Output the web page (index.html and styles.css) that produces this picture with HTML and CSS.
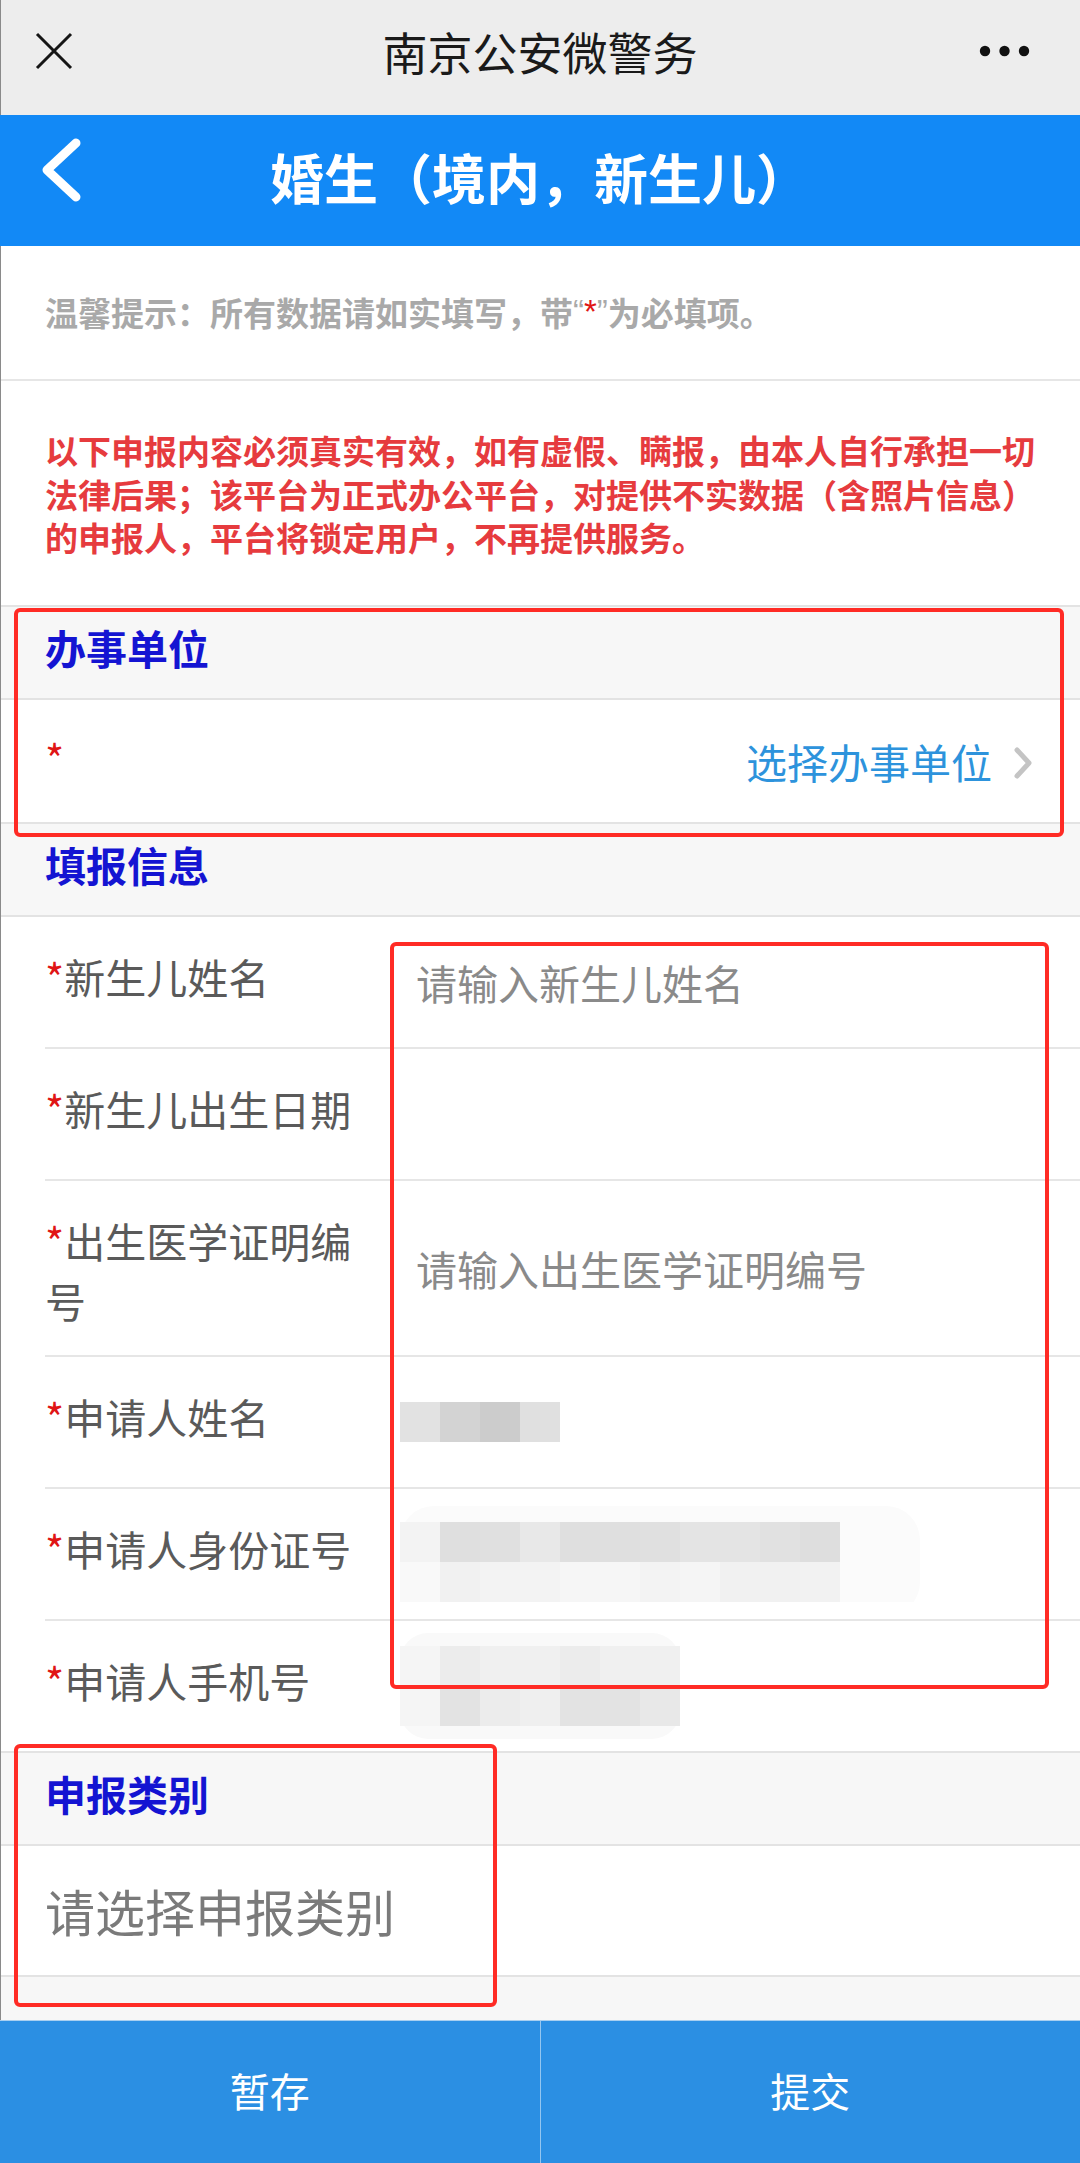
FILE: index.html
```html
<!DOCTYPE html>
<html lang="zh-CN">
<head>
<meta charset="utf-8">
<title>婚生（境内，新生儿）</title>
<link rel="stylesheet" href="styles.css">
</head>
<body>
<div class="page">
  <header class="topbar">
    <div class="tb-left">
      <svg class="close-icon" width="40" height="40" viewBox="0 0 40 40"><path d="M3 3 L37 37 M37 3 L3 37" stroke="#151515" stroke-width="3" fill="none"/></svg>
    </div>
    <div class="tb-title">南京公安微警务</div>
    <div class="tb-right">
      <svg class="dots-icon" width="52" height="12" viewBox="0 0 52 12"><circle cx="6" cy="6" r="5.2" fill="#111"/><circle cx="25.5" cy="6" r="5.2" fill="#111"/><circle cx="45" cy="6" r="5.2" fill="#111"/></svg>
    </div>
  </header>

  <div class="navbar">
    <div class="nav-left">
      <svg class="back-icon" width="48" height="72" viewBox="0 0 48 72"><polyline points="38,8 9,35 38,62" stroke="#fff" stroke-width="9" stroke-linecap="round" stroke-linejoin="round" fill="none"/></svg>
    </div>
    <h1 class="nav-title">婚生（境内，新生儿）</h1>
    <div class="nav-right"></div>
  </div>

  <main class="content">
    <div class="hint">温馨提示：所有数据请如实填写，带<span class="q">“</span><span class="req q">*</span><span class="q">”</span>为必填项。</div>
    <div class="warning">以下申报内容必须真实有效，如有虚假、瞒报，由本人自行承担一切法律后果；该平台为正式办公平台，对提供不实数据（含照片信息）的申报人，平台将锁定用户，不再提供服务。</div>

    <div class="sec-head">办事单位</div>
    <div class="unit-row">
      <span class="req">*</span>
      <span class="unit-pick">选择办事单位<svg class="chev" width="22" height="32" viewBox="0 0 22 32"><polyline points="5,3 17,16 5,29" stroke="#c4c4c4" stroke-width="5" fill="none" stroke-linecap="round" stroke-linejoin="round"/></svg></span>
    </div>

    <div class="sec-head">填报信息</div>
    <div class="fields">
      <div class="field">
        <div class="f-label"><span class="req">*</span>新生儿姓名</div>
        <div class="f-value">请输入新生儿姓名</div>
      </div>
      <div class="field">
        <div class="f-label"><span class="req">*</span>新生儿出生日期</div>
        <div class="f-value"></div>
      </div>
      <div class="field">
        <div class="f-label"><span class="req">*</span>出生医学证明编<br>号</div>
        <div class="f-value">请输入出生医学证明编号</div>
      </div>
      <div class="field">
        <div class="f-label"><span class="req">*</span>申请人姓名</div>
        <div class="f-value">
          <svg class="mosaic" width="160" height="40" viewBox="0 0 160 40">
            <rect x="0" y="0" width="40" height="40" fill="#e2e2e2"/>
            <rect x="40" y="0" width="40" height="40" fill="#d3d3d3"/>
            <rect x="80" y="0" width="40" height="40" fill="#cccccc"/>
            <rect x="120" y="0" width="40" height="40" fill="#e0e0e0"/>
          </svg>
        </div>
      </div>
      <div class="field">
        <div class="f-label"><span class="req">*</span>申请人身份证号</div>
        <div class="f-value">
          <svg class="mosaic" width="520" height="96" viewBox="0 0 520 96">
            <rect x="0" y="0" width="520" height="110" rx="34" fill="#fbfbfb"/>
            <rect x="0" y="16" width="40" height="40" fill="#f3f3f3"/>
            <rect x="40" y="16" width="40" height="40" fill="#dfdfdf"/>
            <rect x="80" y="16" width="40" height="40" fill="#e0e0e0"/>
            <rect x="120" y="16" width="40" height="40" fill="#e8e8e8"/>
            <rect x="160" y="16" width="40" height="40" fill="#dfdfdf"/>
            <rect x="200" y="16" width="40" height="40" fill="#dfdfdf"/>
            <rect x="240" y="16" width="40" height="40" fill="#e0e0e0"/>
            <rect x="280" y="16" width="40" height="40" fill="#e4e4e4"/>
            <rect x="320" y="16" width="40" height="40" fill="#e4e4e4"/>
            <rect x="360" y="16" width="40" height="40" fill="#e1e1e1"/>
            <rect x="400" y="16" width="40" height="40" fill="#dedede"/>
            <rect x="0" y="56" width="40" height="40" fill="#f9f9f9"/>
            <rect x="40" y="56" width="40" height="40" fill="#f1f1f1"/>
            <rect x="80" y="56" width="40" height="40" fill="#f3f3f3"/>
            <rect x="120" y="56" width="40" height="40" fill="#f3f3f3"/>
            <rect x="160" y="56" width="40" height="40" fill="#f6f6f6"/>
            <rect x="200" y="56" width="40" height="40" fill="#f6f6f6"/>
            <rect x="240" y="56" width="40" height="40" fill="#f3f3f3"/>
            <rect x="280" y="56" width="40" height="40" fill="#f5f5f5"/>
            <rect x="320" y="56" width="40" height="40" fill="#f1f1f1"/>
            <rect x="360" y="56" width="40" height="40" fill="#f1f1f1"/>
            <rect x="400" y="56" width="40" height="40" fill="#f2f2f2"/>
          </svg>
        </div>
      </div>
      <div class="field">
        <div class="f-label"><span class="req">*</span>申请人手机号</div>
        <div class="f-value">
          <svg class="mosaic" width="280" height="106" viewBox="0 0 280 106">
            <rect x="0" y="0" width="280" height="106" rx="28" fill="#f9f9f9"/>
            <rect x="0" y="13" width="40" height="40" fill="#f5f5f5"/>
            <rect x="40" y="13" width="40" height="40" fill="#ececec"/>
            <rect x="80" y="13" width="40" height="40" fill="#f0f0f0"/>
            <rect x="120" y="13" width="40" height="40" fill="#f0f0f0"/>
            <rect x="160" y="13" width="40" height="40" fill="#ececec"/>
            <rect x="200" y="13" width="40" height="40" fill="#f0f0f0"/>
            <rect x="240" y="13" width="40" height="40" fill="#f0f0f0"/>
            <rect x="0" y="53" width="40" height="40" fill="#f5f5f5"/>
            <rect x="40" y="53" width="40" height="40" fill="#e3e3e3"/>
            <rect x="80" y="53" width="40" height="40" fill="#ececec"/>
            <rect x="120" y="53" width="40" height="40" fill="#efefef"/>
            <rect x="160" y="53" width="40" height="40" fill="#e3e3e3"/>
            <rect x="200" y="53" width="40" height="40" fill="#e3e3e3"/>
            <rect x="240" y="53" width="40" height="40" fill="#e8e8e8"/>
          </svg>
        </div>
      </div>
    </div>

    <div class="sec-head">申报类别</div>
    <div class="select-row">请选择申报类别</div>
    <div class="spacer"></div>
    <div class="edge"></div>
  </main>

  <footer class="actions">
    <div class="btn">暂存</div>
    <div class="btn">提交</div>
  </footer>

  <div class="mark mark-unit"></div>
  <div class="mark mark-fields"></div>
  <div class="mark mark-type"></div>
</div>
</body>
</html>
```

FILE: styles.css
```css
* { box-sizing: border-box; }

html, body {
  margin: 0;
  padding: 0;
  background: #ffffff;
}

body {
  font-family: "Noto Sans CJK SC", "Noto Sans", sans-serif;
  width: 1080px;
}

.page {
  position: relative;
  width: 1080px;
}

/* top WeChat bar */
.topbar {
  display: grid;
  grid-template-columns: 1fr auto 1fr;
  align-items: center;
  height: 115px;
  background: #ededed;
  box-shadow: inset 1px 0 0 #8a8a8a;
}

.tb-left {
  padding-left: 34px;
  padding-bottom: 14px;
  display: flex;
}

.tb-title {
  font-size: 45px;
  line-height: 60px;
  color: #1a1a1a;
  padding-bottom: 12px;
}

.tb-right {
  display: flex;
  justify-content: flex-end;
  padding-right: 49px;
  padding-bottom: 14px;
}

/* blue nav */
.navbar {
  display: grid;
  grid-template-columns: 1fr auto 1fr;
  height: 131px;
  background: #1289f6;
}

.nav-left {
  padding-left: 38px;
  padding-top: 20px;
}

.back-icon { display: block; }

.nav-title {
  margin: 0;
  font-size: 54px;
  font-weight: 700;
  color: #ffffff;
  line-height: 124px;
  padding-bottom: 7px;
  letter-spacing: 0;
}

/* content */
.content {
  position: relative;
  background: #f7f7f7;
}

.edge {
  position: absolute;
  left: 0;
  top: 0;
  bottom: 0;
  width: 1px;
  background: #8a8a8a;
}

.req { color: #e01515; }

.hint {
  display: flex;
  align-items: center;
  height: 135px;
  padding: 0 45px 2px;
  background: #ffffff;
  border-bottom: 2px solid #e6e6e6;
  font-size: 33px;
  font-weight: 700;
  color: #a9a9a9;
  white-space: nowrap;
}

.hint .q {
  font-family: "Liberation Sans", Arial, sans-serif;
  font-weight: 400;
}

.warning {
  background: #ffffff;
  padding: 48px 40px 45px 45px;
  height: 224px;
  font-size: 33px;
  line-height: 43.5px;
  font-weight: 700;
  color: #e63b3e;
}

.sec-head {
  border-top: 2px solid #e3e3e3;
  background: #f7f7f7;
  height: 93px;
  padding: 12px 45px 0;
  font-size: 41px;
  line-height: 57px;
  font-weight: 700;
  color: #1414d2;
}

.unit-row {
  display: flex;
  align-items: center;
  justify-content: space-between;
  border-top: 2px solid #e3e3e3;
  background: #ffffff;
  height: 124px;
  padding: 0 46px 0 45px;
  font-size: 41px;
}

.unit-row .req { font-size: 41px; padding-bottom: 8px; }

.unit-pick {
  display: flex;
  align-items: center;
  color: #2d93dc;
  line-height: 60px;
}

.chev {
  display: block;
  margin-left: 20px;
  margin-top: 4px;
}

.fields {
  border-top: 2px solid #e3e3e3;
  background: #ffffff;
}

.field {
  display: flex;
  margin-left: 45px;
  min-height: 132px;
  border-bottom: 2px solid #e6e6e6;
}

.field:last-child {
  border-bottom: none;
  min-height: 130px;
}

.f-label {
  flex: 0 0 325px;
  padding: 29px 0 25px;
  font-size: 41px;
  line-height: 60px;
  color: #5a5a5a;
}

.f-value {
  flex: 1;
  display: flex;
  align-items: center;
  padding-left: 46px;
  font-size: 41px;
  color: #8a8a8a;
}

.mosaic {
  display: block;
  margin-left: -16px;
}

.select-row {
  display: flex;
  align-items: center;
  border-top: 2px solid #e3e3e3;
  background: #ffffff;
  height: 131px;
  padding: 0 45px 2px;
  font-size: 50px;
  color: #7a7a7a;
}

.spacer {
  border-top: 2px solid #e3e3e3;
  height: 45px;
  background: #f7f7f7;
}

/* bottom actions */
.actions {
  display: flex;
  height: 145px;
  background: #2b8fe3;
  border-top: 1px solid #a9cff0;
}

.btn {
  flex: 1;
  display: flex;
  align-items: center;
  justify-content: center;
  font-size: 40px;
  color: #ffffff;
  padding-bottom: 6px;
}

.btn + .btn {
  border-left: 1px solid #94c6f0;
}

/* red annotation boxes drawn over the screenshot */
.mark {
  position: absolute;
  border: 4px solid #ff2b25;
  border-radius: 6px;
  pointer-events: none;
}

.mark-unit {
  left: 14px;
  top: 608px;
  width: 1050px;
  height: 229px;
}

.mark-fields {
  left: 390px;
  top: 942px;
  width: 659px;
  height: 747px;
}

.mark-type {
  left: 14px;
  top: 1744px;
  width: 483px;
  height: 263px;
}
```
